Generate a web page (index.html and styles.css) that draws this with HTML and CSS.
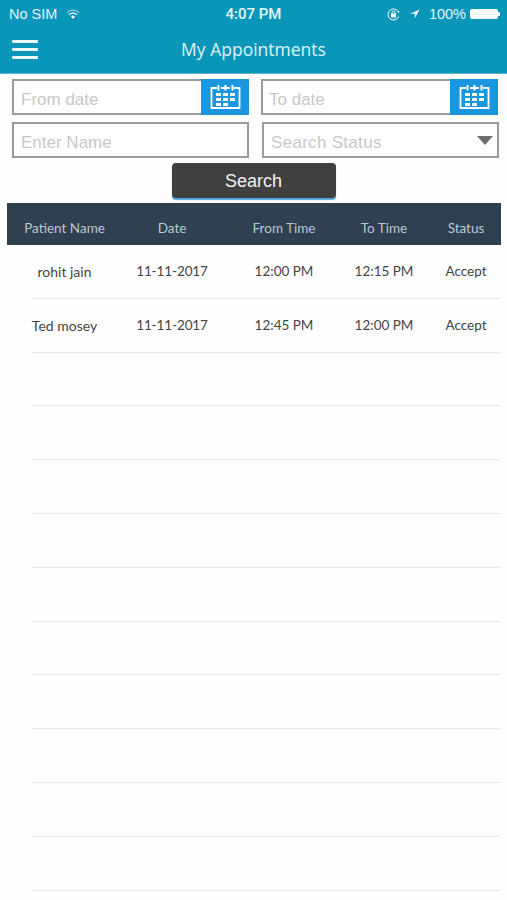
FILE: index.html
```html
<!DOCTYPE html>
<html lang="en">
<head>
    <meta charset="UTF-8">
    <meta name="viewport" content="width=device-width, initial-scale=1.0">
    <title>My Appointments</title>
    <link rel="stylesheet" href="styles.css">
</head>
<body>
    <div class="header">
        <div class="status-bar">
            <div class="status-left">
                <span>No SIM</span>
                <svg class="wifi" width="14" height="11" viewBox="0 0 14 11">
                    <path d="M1 3.6a8.6 8.6 0 0 1 12 0" fill="none" stroke="#8fd0e0" stroke-width="1.3"/>
                    <path d="M3 5.8a5.8 5.8 0 0 1 8 0" fill="none" stroke="#fff" stroke-width="1.3"/>
                    <path d="M4.9 7.6a3 3 0 0 1 4.2 0L7 10z" fill="#fff"/>
                </svg>
            </div>
            <div class="status-time">4:07 PM</div>
            <div class="status-right">
                <svg width="13" height="13" viewBox="0 0 13 13">
                    <path d="M11.6 8.5A5.5 5.5 0 1 1 11.6 4.5" fill="none" stroke="#fff" stroke-width="1"/>
                    <path d="M10.5 3.2l2 .4-1 1.8z" fill="#fff"/>
                    <rect x="4" y="5.6" width="5" height="3.8" rx=".5" fill="#fff"/>
                    <path d="M5 5.8V4.6a1.5 1.5 0 0 1 3 0v1.2" fill="none" stroke="#fff"/>
                </svg>
                <svg class="arrow" width="10" height="10" viewBox="0 0 11 11">
                    <path d="M10.5.5L.5 5.2h4.8v5z" fill="#fff"/>
                </svg>
                <span class="battery-text">100%</span>
                <div class="battery"></div>
                <div class="battery-tip"></div>
            </div>
        </div>
        <div class="nav-bar">
            <div class="menu-icon">
                <span></span>
                <span></span>
                <span></span>
            </div>
            <h1>My Appointments</h1>
        </div>
    </div>

    <div class="filters">
        <div class="field">
            <span class="placeholder">From date</span>
            <div class="date-button">
                <svg width="33" height="26" viewBox="0 0 33 26">
                    <use href="#calendar"/>
                </svg>
            </div>
        </div>
        <div class="field field-to">
            <span class="placeholder">To date</span>
            <div class="date-button">
                <svg width="33" height="26" viewBox="0 0 33 26">
                    <use href="#calendar"/>
                </svg>
            </div>
        </div>
        <div class="field">
            <span class="placeholder">Enter Name</span>
        </div>
        <div class="field field-status">
            <span class="placeholder">Search Status</span>
            <div class="caret"></div>
        </div>
    </div>

    <div class="search-row">
        <button class="search-button">Search</button>
    </div>

    <div class="table">
        <div class="table-head">
            <div>Patient Name</div>
            <div>Date</div>
            <div>From Time</div>
            <div>To Time</div>
            <div class="col-status">Status</div>
        </div>
        <div class="row">
            <div class="col-name">rohit jain</div>
            <div class="col-date">11-11-2017</div>
            <div>12:00 PM</div>
            <div>12:15 PM</div>
            <div class="col-status">Accept</div>
        </div>
        <div class="row">
            <div class="col-name">Ted mosey</div>
            <div class="col-date">11-11-2017</div>
            <div>12:45 PM</div>
            <div>12:00 PM</div>
            <div class="col-status">Accept</div>
        </div>
        <div class="row"></div>
        <div class="row"></div>
        <div class="row"></div>
        <div class="row"></div>
        <div class="row"></div>
        <div class="row"></div>
        <div class="row"></div>
        <div class="row"></div>
        <div class="row"></div>
        <div class="row"></div>
    </div>

    <!-- shared calendar icon -->
    <svg class="icon-defs" width="0" height="0">
        <symbol id="calendar" viewBox="0 0 33 26">
            <path d="M8 4H2.5v20h28V4H25M12 4h9" fill="none" stroke="#fff" stroke-width="1.8"/>
            <path d="M9.5 1v5.5M16.5 1v5.5M23.5 1v5.5" fill="none" stroke="#fff" stroke-width="2"/>
            <path d="M7 9h5v3H7zM14 9h5v3h-5zM21 9h5v3h-5zM7 14h5v3H7zM14 14h5v3h-5zM21 14h5v3h-5zM7 19h5v3H7zM14 19h5v3h-5z" fill="#fff"/>
        </symbol>
    </svg>
</body>
</html>
```

FILE: styles.css
```css
body {
    font-family: "Liberation Sans", Arial, sans-serif;
    background-color: #fefefe;
    margin: 0;
    padding: 0;
    height: 900px;
    overflow: hidden;
}
.header {
    height: 74px;
    background-color: #0a96b8;
    color: white;
    box-sizing: border-box;
    border-bottom: 1px solid #5fb6cc;
}
.status-bar {
    height: 28px;
    position: relative;
    display: flex;
    justify-content: space-between;
    align-items: center;
    padding: 0 7px 0 9px;
    font-size: 14.5px;
    color: #e4f4f8;
}
.status-left, .status-right {
    display: flex;
    align-items: center;
}
.wifi {
    margin-left: 9px;
}
.status-time {
    position: absolute;
    left: 0;
    right: 0;
    text-align: center;
    font-family: Roboto, sans-serif;
    font-weight: 500;
    font-size: 15px;
}
.arrow {
    margin-left: 10px;
}
.battery-text {
    margin-left: 9px;
}
.battery {
    width: 28px;
    height: 10px;
    margin-left: 4px;
    background: white;
    border-radius: 2px;
}
.battery-tip {
    width: 2px;
    height: 4px;
    background: white;
}
.nav-bar {
    height: 45px;
    display: flex;
    align-items: center;
    justify-content: center;
    position: relative;
}
.nav-bar h1 {
    margin: 0 0 3px 0;
    font-family: "Open Sans", sans-serif;
    font-size: 17.5px;
    font-weight: 400;
    color: #dff3f8;
}
.menu-icon {
    position: absolute;
    left: 12px;
    top: 12px;
    width: 26px;
    display: flex;
    flex-direction: column;
    gap: 5px;
}
.menu-icon span {
    height: 3px;
    background: #eef9fb;
    border-radius: 1px;
}
.filters {
    display: grid;
    grid-template-columns: 237px 237px;
    column-gap: 12px;
    row-gap: 7px;
    padding: 5px 0 0 12px;
}
.field {
    height: 36px;
    box-sizing: border-box;
    border: 2px solid #9a9a9a;
    background: white;
    display: flex;
    align-items: center;
    justify-content: space-between;
    padding: 5px 0 0 7px;
    position: relative;
}
.field-to {
    padding-left: 6px;
}
.field-status {
    margin: 0 -1px 0 1px;
    padding-left: 7px;
}
.field-status .placeholder {
    letter-spacing: .3px;
}
.placeholder {
    font-size: 17px;
    color: #c8c8c8;
}
.date-button {
    position: absolute;
    top: -2px;
    right: -2px;
    width: 48px;
    height: 36px;
    background: #1a96de;
    display: flex;
    align-items: center;
    justify-content: center;
}
.caret {
    width: 0;
    height: 0;
    margin: 0 4px 5px 0;
    border-left: 8px solid transparent;
    border-right: 8px solid transparent;
    border-top: 9px solid #6e6e6e;
}
.search-row {
    display: flex;
    justify-content: center;
    padding-top: 5px;
}
.search-button {
    width: 164px;
    height: 35px;
    background: #404040;
    color: #f2f2f2;
    border: none;
    border-radius: 4px;
    box-shadow: 0 2px 1px #4aa6dc;
    font-family: "Liberation Sans", Arial, sans-serif;
    font-size: 18px;
    padding: 2px 0 0 0;
}
.table {
    margin: 5px 6px 0 7px;
    font-family: Lato, sans-serif;
}
.table-head, .row {
    display: grid;
    grid-template-columns: 115px 100px 124px 76px 79px;
    text-align: center;
}
.table-head {
    height: 42px;
    box-sizing: border-box;
    padding-top: 17px;
    background: #2f4050;
    color: #bcc8d0;
    font-size: 13.5px;
}
.col-status {
    padding-left: 9px;
}
.row {
    height: 53.8px;
    box-sizing: border-box;
    margin-left: 25px;
    grid-template-columns: 90px 100px 124px 76px 79px;
    align-items: center;
    border-bottom: 1px solid #e9e9e9;
    color: #444;
    font-size: 13.5px;
}
.col-name {
    margin-left: -25px;
    font-size: 14px;
}
.col-date {
    letter-spacing: -.1px;
}
.icon-defs {
    position: absolute;
}
```
